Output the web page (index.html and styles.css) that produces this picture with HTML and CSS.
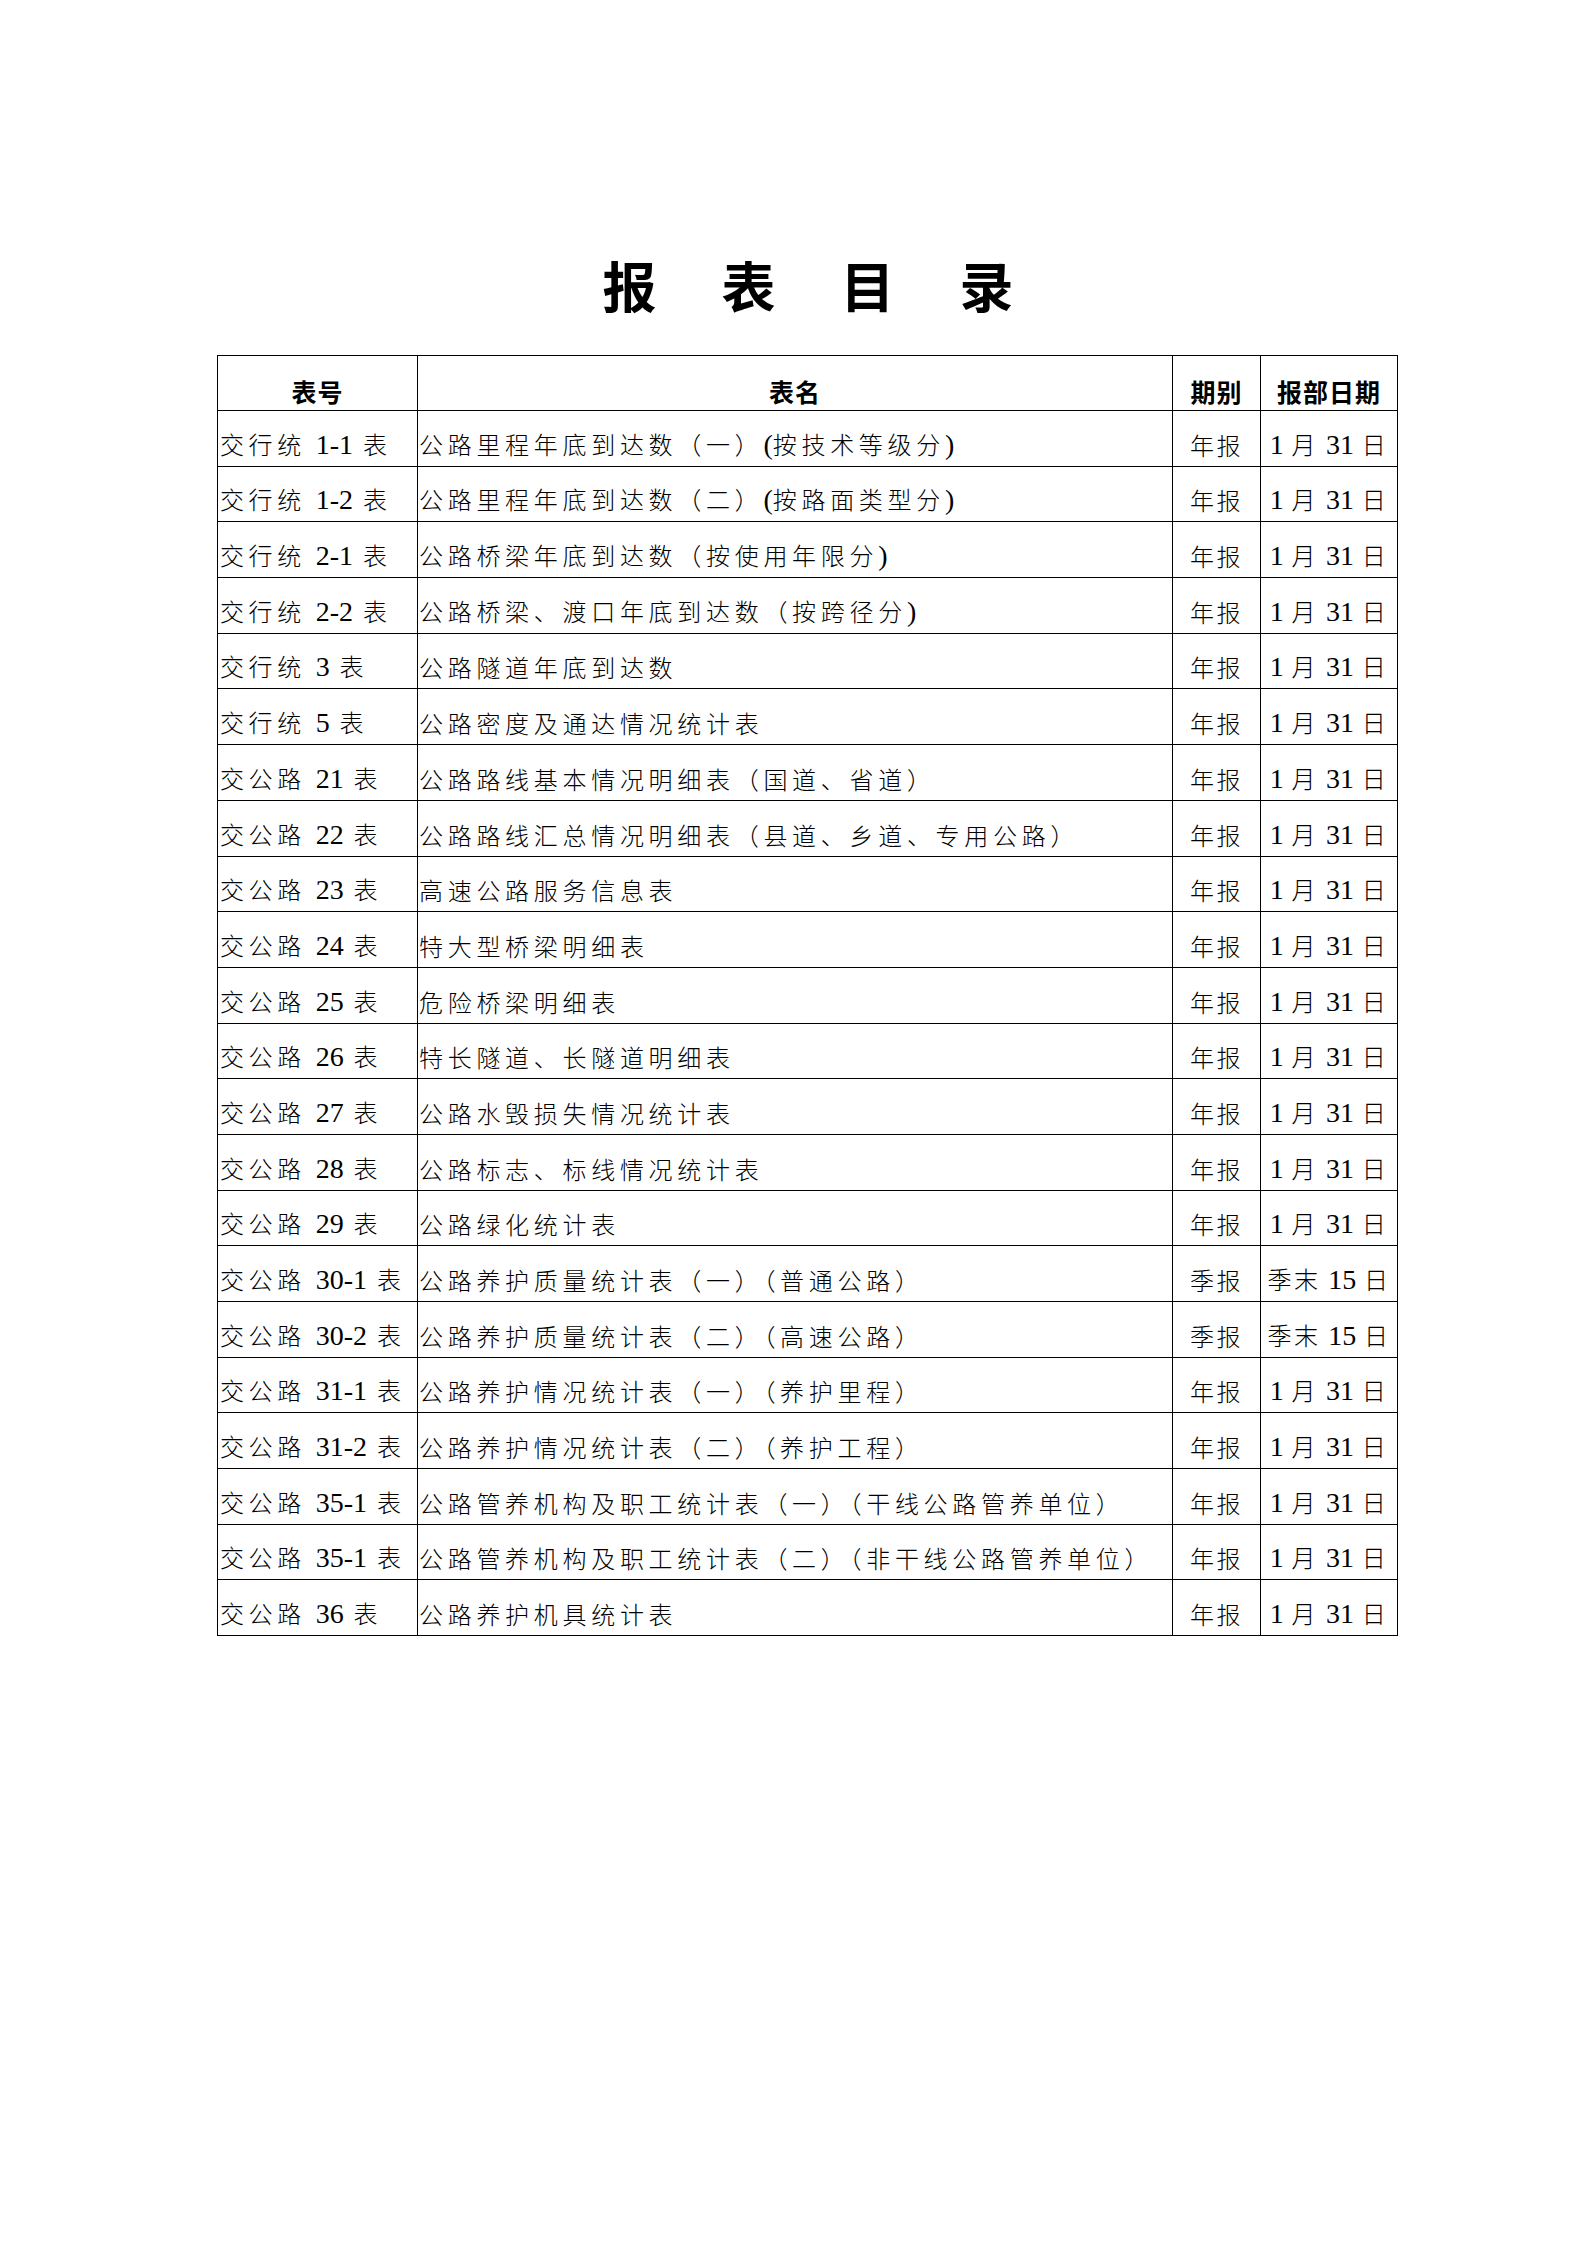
FILE: index.html
```html
<!DOCTYPE html>
<html lang="zh-CN">
<head>
<meta charset="utf-8">
<title>报表目录</title>
<link rel="stylesheet" href="styles.css">
</head>
<body>
<div class="page">
  <h1 class="title">报表目录</h1>
  <table class="catalog">
    <colgroup>
      <col class="c-no"><col class="c-name"><col class="c-period"><col class="c-date">
    </colgroup>
    <thead>
      <tr><th class="h-no">表号</th><th class="h-name">表名</th><th class="h-period">期别</th><th class="h-date">报部日期</th></tr>
    </thead>
    <tbody>
      <tr><td class="no">交行统 <span class="n">1-1</span> 表</td><td class="name">公路里程年底到达数（一）<span class="n">(</span>按技术等级分<span class="n">)</span></td><td class="period">年报</td><td class="date"><span class="n">1</span> 月 <span class="n">31</span> 日</td></tr>
      <tr><td class="no">交行统 <span class="n">1-2</span> 表</td><td class="name">公路里程年底到达数（二）<span class="n">(</span>按路面类型分<span class="n">)</span></td><td class="period">年报</td><td class="date"><span class="n">1</span> 月 <span class="n">31</span> 日</td></tr>
      <tr><td class="no">交行统 <span class="n">2-1</span> 表</td><td class="name">公路桥梁年底到达数（按使用年限分<span class="n">)</span></td><td class="period">年报</td><td class="date"><span class="n">1</span> 月 <span class="n">31</span> 日</td></tr>
      <tr><td class="no">交行统 <span class="n">2-2</span> 表</td><td class="name">公路桥梁、渡口年底到达数（按跨径分<span class="n">)</span></td><td class="period">年报</td><td class="date"><span class="n">1</span> 月 <span class="n">31</span> 日</td></tr>
      <tr><td class="no">交行统 <span class="n">3</span> 表</td><td class="name">公路隧道年底到达数</td><td class="period">年报</td><td class="date"><span class="n">1</span> 月 <span class="n">31</span> 日</td></tr>
      <tr><td class="no">交行统 <span class="n">5</span> 表</td><td class="name">公路密度及通达情况统计表</td><td class="period">年报</td><td class="date"><span class="n">1</span> 月 <span class="n">31</span> 日</td></tr>
      <tr><td class="no">交公路 <span class="n">21</span> 表</td><td class="name">公路路线基本情况明细表（国道、省道）</td><td class="period">年报</td><td class="date"><span class="n">1</span> 月 <span class="n">31</span> 日</td></tr>
      <tr><td class="no">交公路 <span class="n">22</span> 表</td><td class="name">公路路线汇总情况明细表（县道、乡道、专用公路）</td><td class="period">年报</td><td class="date"><span class="n">1</span> 月 <span class="n">31</span> 日</td></tr>
      <tr><td class="no">交公路 <span class="n">23</span> 表</td><td class="name">高速公路服务信息表</td><td class="period">年报</td><td class="date"><span class="n">1</span> 月 <span class="n">31</span> 日</td></tr>
      <tr><td class="no">交公路 <span class="n">24</span> 表</td><td class="name">特大型桥梁明细表</td><td class="period">年报</td><td class="date"><span class="n">1</span> 月 <span class="n">31</span> 日</td></tr>
      <tr><td class="no">交公路 <span class="n">25</span> 表</td><td class="name">危险桥梁明细表</td><td class="period">年报</td><td class="date"><span class="n">1</span> 月 <span class="n">31</span> 日</td></tr>
      <tr><td class="no">交公路 <span class="n">26</span> 表</td><td class="name">特长隧道、长隧道明细表</td><td class="period">年报</td><td class="date"><span class="n">1</span> 月 <span class="n">31</span> 日</td></tr>
      <tr><td class="no">交公路 <span class="n">27</span> 表</td><td class="name">公路水毁损失情况统计表</td><td class="period">年报</td><td class="date"><span class="n">1</span> 月 <span class="n">31</span> 日</td></tr>
      <tr><td class="no">交公路 <span class="n">28</span> 表</td><td class="name">公路标志、标线情况统计表</td><td class="period">年报</td><td class="date"><span class="n">1</span> 月 <span class="n">31</span> 日</td></tr>
      <tr><td class="no">交公路 <span class="n">29</span> 表</td><td class="name">公路绿化统计表</td><td class="period">年报</td><td class="date"><span class="n">1</span> 月 <span class="n">31</span> 日</td></tr>
      <tr><td class="no">交公路 <span class="n">30-1</span> 表</td><td class="name">公路养护质量统计表（一）（普通公路）</td><td class="period">季报</td><td class="date">季末 <span class="n">15</span> 日</td></tr>
      <tr><td class="no">交公路 <span class="n">30-2</span> 表</td><td class="name">公路养护质量统计表（二）（高速公路）</td><td class="period">季报</td><td class="date">季末 <span class="n">15</span> 日</td></tr>
      <tr><td class="no">交公路 <span class="n">31-1</span> 表</td><td class="name">公路养护情况统计表（一）（养护里程）</td><td class="period">年报</td><td class="date"><span class="n">1</span> 月 <span class="n">31</span> 日</td></tr>
      <tr><td class="no">交公路 <span class="n">31-2</span> 表</td><td class="name">公路养护情况统计表（二）（养护工程）</td><td class="period">年报</td><td class="date"><span class="n">1</span> 月 <span class="n">31</span> 日</td></tr>
      <tr><td class="no">交公路 <span class="n">35-1</span> 表</td><td class="name">公路管养机构及职工统计表（一）（干线公路管养单位）</td><td class="period">年报</td><td class="date"><span class="n">1</span> 月 <span class="n">31</span> 日</td></tr>
      <tr><td class="no">交公路 <span class="n">35-1</span> 表</td><td class="name">公路管养机构及职工统计表（二）（非干线公路管养单位）</td><td class="period">年报</td><td class="date"><span class="n">1</span> 月 <span class="n">31</span> 日</td></tr>
      <tr><td class="no">交公路 <span class="n">36</span> 表</td><td class="name">公路养护机具统计表</td><td class="period">年报</td><td class="date"><span class="n">1</span> 月 <span class="n">31</span> 日</td></tr>
    </tbody>
  </table>
</div>
</body>
</html>
```

FILE: styles.css
```css
html, body {
  margin: 0;
  padding: 0;
  background: #ffffff;
}

body {
  font-family: "Liberation Serif", "Noto Sans CJK SC", serif;
  color: #000000;
}

.page {
  width: 1180px;
  margin-left: 217px;
  padding-top: 257px;
  padding-bottom: 200px;
}

.title {
  margin: 0 0 43px 0;
  height: 55px;
  font-family: "Noto Sans CJK SC", sans-serif;
  font-size: 54px;
  line-height: 55px;
  font-weight: 700;
  letter-spacing: 65px;
  padding-left: 67px;
  text-align: center;
}

.catalog {
  width: 1180px;
  border-collapse: collapse;
  table-layout: fixed;
}

.c-no { width: 200px; }
.c-name { width: 755px; }
.c-period { width: 88px; }
.c-date { width: 137px; }

.catalog th,
.catalog td {
  border: 1px solid #000000;
  padding: 0 0 6px 0;
  vertical-align: bottom;
  white-space: nowrap;
  overflow: hidden;
}

.catalog thead tr { height: 55px; }
.catalog tbody tr { height: 55.7px; }

.catalog th {
  font-family: "Noto Sans CJK SC", sans-serif;
  font-size: 25px;
  line-height: 30px;
  font-weight: 700;
  letter-spacing: 1px;
  text-align: center;
  padding-bottom: 4px;
}

.catalog td {
  font-family: "Noto Sans CJK SC", sans-serif;
  font-size: 24px;
  line-height: 30px;
  font-weight: 300;
  letter-spacing: 2.5px;
}

.catalog td.no { padding-left: 2px; text-align: left; letter-spacing: 4.6px; }
.catalog td.name { padding-left: 1px; text-align: left; letter-spacing: 4.7px; }
.catalog td.period { text-align: center; }
.catalog td.date { text-align: center; }

.n {
  font-family: "Liberation Serif", serif;
  font-size: 28px;
  font-weight: 400;
  letter-spacing: 0;
}
```
